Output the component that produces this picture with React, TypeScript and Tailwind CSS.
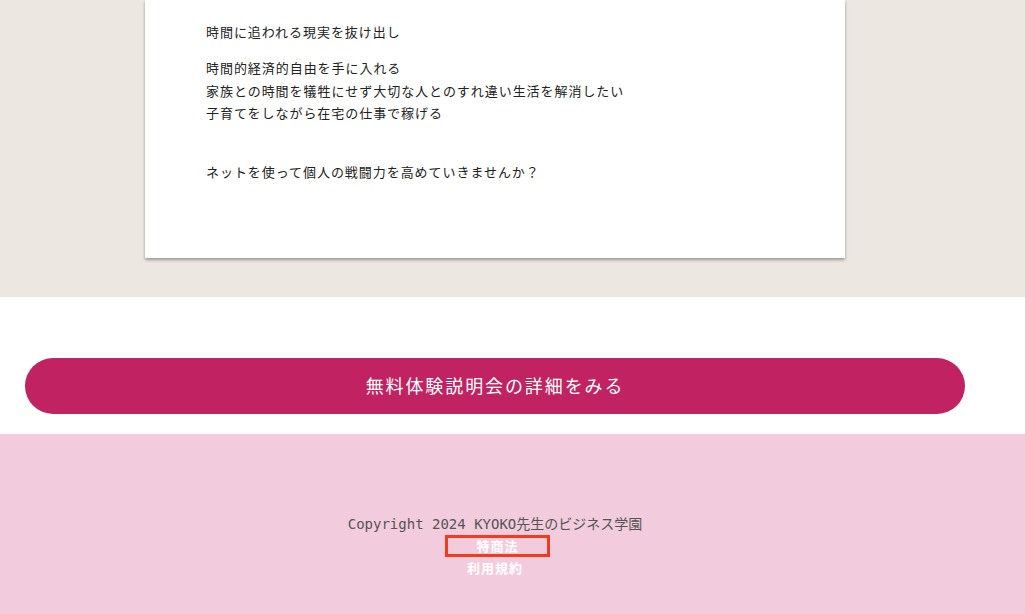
import React from "react";

export default function App() {
  const jp = { fontFamily: '"Noto Sans CJK JP", "Noto Sans", sans-serif' };
  return (
    <div className="w-[1025px] min-h-[614px]" style={jp}>
      <section className="bg-[#ece7e0] pb-[39px]">
        <div className="w-[990px]">
          <div className="mx-auto w-[700px] bg-white shadow-[0_2px_3px_rgba(0,0,0,0.35)] pl-[61px] pt-[21px] pb-[61px] text-[13px] leading-[22.5px] tracking-[0.95px] text-[#222]">
            <p className="mb-[13.5px]">時間に追われる現実を抜け出し</p>
            <p className="mb-[13.5px]">
              時間的経済的自由を手に入れる
              <br />
              家族との時間を犠牲にせず大切な人とのすれ違い生活を解消したい
              <br />
              子育てをしながら在宅の仕事で稼げる
            </p>
            <p className="mb-[13.5px]">
              <br />
              ネットを使って個人の戦闘力を高めていきませんか？
            </p>
          </div>
        </div>
      </section>
      <section className="bg-white pt-[61px] pb-[20px]">
        <div className="w-[990px]">
          <a className="mx-auto flex h-[56px] w-[940px] items-center justify-center rounded-full bg-[#c12362] text-[18px] font-normal tracking-[1.9px] text-white">
            無料体験説明会の詳細をみる
          </a>
        </div>
      </section>
      <footer className="h-[180px] bg-[#f2cbdc] pt-[79px]">
        <div className="w-[990px] text-center">
          <p
            className="text-[14px] leading-[22px] text-[#555]"
            style={{ fontFamily: '"DejaVu Sans Mono", "Noto Sans CJK JP", monospace' }}
          >
            Copyright 2024 KYOKO先生のビジネス学園
          </p>
          <div className="flex justify-center">
            <a className="ml-[5px] block h-[22px] w-[105px] border-[3px] border-[#f23c1d] text-[13px] font-bold leading-[16px] tracking-[1px] text-white">
              特商法
            </a>
          </div>
          <a className="block text-[13px] font-bold leading-[22px] tracking-[1px] text-white">
            利用規約
          </a>
        </div>
      </footer>
    </div>
  );
}
